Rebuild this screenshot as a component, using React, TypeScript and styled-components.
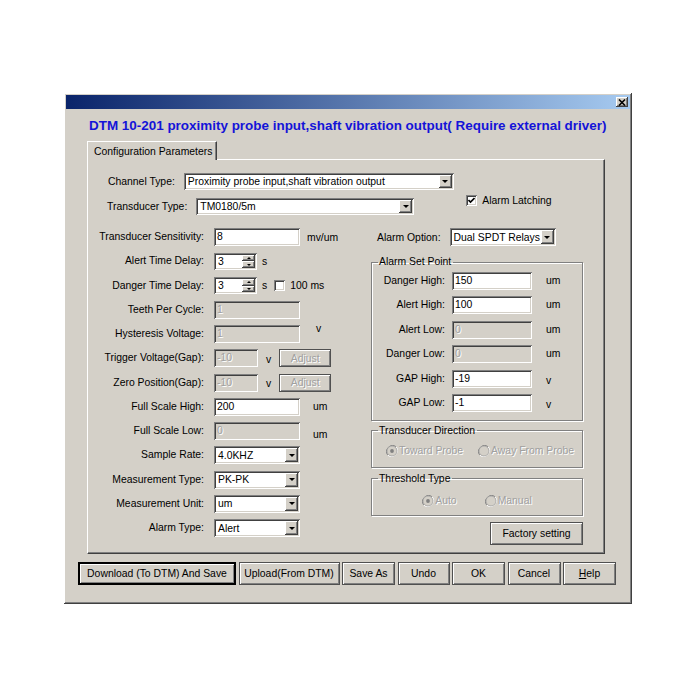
import React from "react";
import styled, { createGlobalStyle, css } from "styled-components";

const GlobalStyle = createGlobalStyle`
    html, body {
        margin: 0;
        padding: 0;
        background: #ffffff;
    }
    body {
        font-family: "Liberation Sans", Arial, sans-serif;
        font-size: 10.4px;
        color: #000;
    }
`;

const face = "#d4d0c8";

const sunken = css`
    box-shadow: inset 1px 1px #808080, inset -1px -1px #ffffff, inset 2px 2px #404040, inset -2px -2px ${face};
`;

const raised = css`
    box-shadow: inset -1px -1px #404040, inset 1px 1px #ffffff, inset -2px -2px #808080, inset 2px 2px ${face};
`;

const Page = styled.div`
    padding: 93px 0 0 64px;
`;

const Window = styled.div`
    width: 568px;
    height: 511px;
    box-sizing: border-box;
    background: ${face};
    padding: 2px;
    ${raised};
    display: flex;
    flex-direction: column;
`;

const TitleBar = styled.div`
    height: 14px;
    background: linear-gradient(to right, #0a246a, #a6caf0);
    display: flex;
    justify-content: flex-end;
    align-items: center;
    padding-right: 2px;
`;

const CloseButton = styled.div`
    width: 12px;
    height: 10px;
    background: ${face};
    ${raised};
    display: flex;
    align-items: center;
    justify-content: center;
`;

const Heading = styled.h1`
    margin: 0;
    padding: 6px 0 0 23px;
    height: 22px;
    font-size: 13.45px;
    font-weight: bold;
    color: #1414d8;
    line-height: 22px;
    white-space: nowrap;
`;

const TabStrip = styled.div`
    margin: 4px 0 0 21px;
    display: flex;
`;

const Tab = styled.div`
    position: relative;
    z-index: 1;
    width: 130px;
    height: 19px;
    box-sizing: border-box;
    padding: 4px 0 0 6px;
    background: ${face};
    border-top: 1px solid #ffffff;
    border-left: 1px solid #ffffff;
    border-right: 1px solid #404040;
    box-shadow: inset -1px 0 #808080;
    margin-bottom: -1px;
`;

const Panel = styled.div`
    margin-left: 21px;
    width: 518px;
    height: 395px;
    box-sizing: border-box;
    border-top: 1px solid #ffffff;
    border-left: 1px solid #ffffff;
    border-right: 1px solid #404040;
    border-bottom: 1px solid #404040;
    box-shadow: inset -1px -1px #808080;
    padding-top: 13px;
    display: flex;
    flex-direction: column;
`;

const TopRow = styled.div<{ $indent: number; $gap: number }>`
    display: flex;
    align-items: flex-start;
    height: 17px;
    padding-left: ${({ $indent }) => $indent}px;
    gap: ${({ $gap }) => $gap}px;
    margin-bottom: 8px;
`;

const TopLabel = styled.span`
    line-height: 17px;
    white-space: nowrap;
`;

const Columns = styled.div`
    display: flex;
    margin-top: 5px;
`;

const LeftGrid = styled.div`
    width: 283px;
    display: grid;
    grid-template-columns: 116px auto;
    grid-auto-rows: 18px;
    column-gap: 10px;
    row-gap: 6.25px;
`;

const Label = styled.span`
    text-align: right;
    line-height: 18px;
    white-space: nowrap;
`;

const Cell = styled.div`
    display: flex;
    align-items: center;
    height: 18px;
`;

const Unit = styled.span<{ $gap: number; $shift?: number }>`
    margin-left: ${({ $gap }) => $gap}px;
    position: relative;
    top: ${({ $shift }) => $shift || 0}px;
    white-space: nowrap;
`;

const TextBox = styled.div<{ $width: number; $disabled?: boolean }>`
    width: ${({ $width }) => $width}px;
    height: 18px;
    box-sizing: border-box;
    padding: 0 3px;
    line-height: 18px;
    white-space: nowrap;
    background: ${({ $disabled }) => ($disabled ? face : "#ffffff")};
    color: ${({ $disabled }) => ($disabled ? "#a0a0a0" : "#000")};
    text-shadow: ${({ $disabled }) => ($disabled ? "1px 1px #ffffff" : "none")};
    ${sunken};
`;

const ComboBox = styled.div<{ $width: number; $height?: number }>`
    width: ${({ $width }) => $width}px;
    height: ${({ $height }) => $height || 18}px;
    box-sizing: border-box;
    padding: 2px;
    background: #ffffff;
    display: flex;
    ${sunken};
`;

const ComboText = styled.span`
    flex: 1;
    padding-left: 2px;
    align-self: center;
    white-space: nowrap;
    overflow: hidden;
`;

const DropButton = styled.div`
    width: 13px;
    background: ${face};
    ${raised};
    display: flex;
    align-items: center;
    justify-content: center;
`;

const Arrow = styled.div<{ $size: number; $up?: boolean }>`
    width: 0;
    height: 0;
    border-left: ${({ $size }) => $size}px solid transparent;
    border-right: ${({ $size }) => $size}px solid transparent;
    ${({ $up, $size }) =>
        $up ? `border-bottom: ${$size}px solid #000;` : `border-top: ${$size}px solid #000;`}
`;

const SpinBox = styled.div`
    width: 43px;
    height: 17px;
    box-sizing: border-box;
    padding: 2px;
    background: #ffffff;
    display: flex;
    ${sunken};
`;

const SpinButtons = styled.div`
    width: 13px;
    display: flex;
    flex-direction: column;
`;

const SpinHalf = styled.div`
    flex: 1;
    background: ${face};
    ${raised};
    display: flex;
    align-items: center;
    justify-content: center;
`;

const CheckBox = styled.div`
    width: 11px;
    height: 11px;
    box-sizing: border-box;
    background: #ffffff;
    ${sunken};
    display: flex;
    align-items: center;
    justify-content: center;
`;

const CheckItem = styled.label<{ $gap: number; $lift?: number }>`
    display: flex;
    align-items: center;
    gap: 5px;
    margin-left: ${({ $gap }) => $gap}px;
    margin-top: ${({ $lift }) => -($lift || 0)}px;
    white-space: nowrap;
`;

const Button = styled.div<{ $width: number; $height?: number; $default?: boolean; $disabled?: boolean }>`
    width: ${({ $width }) => $width}px;
    height: ${({ $height }) => $height || 23}px;
    box-sizing: border-box;
    display: flex;
    align-items: center;
    justify-content: center;
    white-space: nowrap;
    background: ${face};
    color: ${({ $disabled }) => ($disabled ? "#a0a0a0" : "#000")};
    text-shadow: ${({ $disabled }) => ($disabled ? "1px 1px #ffffff" : "none")};
    border: 1px solid ${({ $default }) => ($default ? "#000" : "#505050")};
    box-shadow: ${({ $default }) =>
        $default
            ? "inset 1px 1px #000, inset -1px -1px #000, inset 2px 2px #fff, inset -2px -2px #808080"
            : "inset 1px 1px #fff, inset -1px -1px #808080"};
`;

const AdjustButton = styled(Button)`
    margin-left: 8px;
`;

const RightColumn = styled.div`
    width: 212px;
    display: flex;
    flex-direction: column;
`;

const OptionRow = styled.div`
    display: flex;
    align-items: center;
    padding-left: 6px;
    gap: 9px;
    height: 18px;
    margin-bottom: 10px;
`;

const GroupBox = styled.fieldset<{ $mt?: number; $pb: number }>`
    margin: ${({ $mt }) => $mt || 0}px 0 0 0;
    padding: 4px 0 ${({ $pb }) => $pb}px 0;
    border: 1px solid #808080;
    box-shadow: 1px 1px #ffffff, inset 1px 1px #ffffff;
    min-width: 0;
`;

const Legend = styled.legend`
    margin-left: 6px;
    padding: 0 2px 0 1px;
    line-height: 12px;
`;

const SetPointGrid = styled.div`
    display: grid;
    grid-template-columns: 73px 80px auto;
    grid-auto-rows: 18px;
    column-gap: 7px;
    row-gap: 6.4px;
`;

const SetPointUnit = styled.span<{ $shift?: number }>`
    line-height: 18px;
    padding-left: 7px;
    position: relative;
    top: ${({ $shift }) => $shift || 0}px;
`;

const RadioRow = styled.div<{ $center?: boolean; $gap: number; $mt?: number }>`
    display: flex;
    align-items: center;
    justify-content: ${({ $center }) => ($center ? "center" : "flex-start")};
    padding-left: ${({ $center }) => ($center ? 0 : 14)}px;
    gap: ${({ $gap }) => $gap}px;
    height: 18px;
    margin-top: ${({ $mt }) => $mt || 0}px;
`;

const RadioItem = styled.span`
    display: flex;
    align-items: center;
    gap: 1px;
    color: #a0a0a0;
    text-shadow: 1px 1px #ffffff;
    white-space: nowrap;
`;

const FactoryRow = styled.div`
    display: flex;
    justify-content: flex-end;
    margin-top: 6px;
`;

const ButtonBar = styled.div`
    display: flex;
    gap: 2.5px;
    margin: 8px 0 0 12px;
`;

const Hotkey = styled.span`
    text-decoration: underline;
`;

const Combo: React.FC<{ width: number; height?: number; value: string }> = ({ width, height, value }) => (
    <ComboBox $width={width} $height={height}>
        <ComboText>{value}</ComboText>
        <DropButton>
            <Arrow $size={3} />
        </DropButton>
    </ComboBox>
);

const Spin: React.FC<{ value: string }> = ({ value }) => (
    <SpinBox>
        <ComboText>{value}</ComboText>
        <SpinButtons>
            <SpinHalf>
                <Arrow $size={2} $up />
            </SpinHalf>
            <SpinHalf>
                <Arrow $size={2} />
            </SpinHalf>
        </SpinButtons>
    </SpinBox>
);

const Check: React.FC<{ checked?: boolean }> = ({ checked }) => (
    <CheckBox>
        {checked && (
            <svg width="7" height="7" viewBox="0 0 7 7">
                <path d="M0.5 3 L2.5 5 L6.5 1" stroke="#000" strokeWidth="1.6" fill="none" />
            </svg>
        )}
    </CheckBox>
);

const Radio: React.FC<{ selected?: boolean; label: string }> = ({ selected, label }) => (
    <RadioItem>
        <svg width="12" height="12" viewBox="0 0 12 12">
            <path d="M10.2 1.8 A6 6 0 0 0 1.8 10.2" stroke="#808080" fill="none" />
            <path d="M1.8 10.2 A6 6 0 0 0 10.2 1.8" stroke="#ffffff" fill="none" />
            <circle cx="6" cy="6" r="5" fill={face} stroke="#a0a0a0" strokeWidth="0.8" />
            {selected && <circle cx="6" cy="6" r="1.9" fill="#808080" />}
        </svg>
        {label}
    </RadioItem>
);

const App: React.FC = () => {
    return (
        <Page>
            <GlobalStyle />
            <Window>
                <TitleBar>
                    <CloseButton>
                        <svg width="8" height="7" viewBox="0 0 8 7">
                            <path d="M1 0.5 L7 6.5 M7 0.5 L1 6.5" stroke="#000" strokeWidth="1.6" />
                        </svg>
                    </CloseButton>
                </TitleBar>
                <Heading>DTM 10-201 proximity probe input,shaft vibration output( Require external driver)</Heading>
                <TabStrip>
                    <Tab>Configuration Parameters</Tab>
                </TabStrip>
                <Panel>
                    <TopRow $indent={20} $gap={9}>
                        <TopLabel>Channel Type:</TopLabel>
                        <Combo width={270} height={17} value="Proximity probe input,shaft vibration output" />
                    </TopRow>
                    <TopRow $indent={19} $gap={9}>
                        <TopLabel>Transducer Type:</TopLabel>
                        <Combo width={218} height={17} value="TM0180/5m" />
                        <CheckItem $gap={43} $lift={3}>
                            <Check checked />
                            Alarm Latching
                        </CheckItem>
                    </TopRow>
                    <Columns>
                        <LeftGrid>
                            <Label>Transducer Sensitivity:</Label>
                            <Cell>
                                <TextBox $width={86}>8</TextBox>
                                <Unit $gap={7}>mv/um</Unit>
                            </Cell>
                            <Label>Alert Time Delay:</Label>
                            <Cell>
                                <Spin value="3" />
                                <Unit $gap={5}>s</Unit>
                            </Cell>
                            <Label>Danger Time Delay:</Label>
                            <Cell>
                                <Spin value="3" />
                                <Unit $gap={5}>s</Unit>
                                <CheckItem $gap={7}>
                                    <Check />
                                    100 ms
                                </CheckItem>
                            </Cell>
                            <Label>Teeth Per Cycle:</Label>
                            <Cell>
                                <TextBox $width={86} $disabled>1</TextBox>
                            </Cell>
                            <Label>Hysteresis Voltage:</Label>
                            <Cell>
                                <TextBox $width={86} $disabled>1</TextBox>
                                <Unit $gap={16} $shift={-6}>v</Unit>
                            </Cell>
                            <Label>Trigger Voltage(Gap):</Label>
                            <Cell>
                                <TextBox $width={44} $disabled>-10</TextBox>
                                <Unit $gap={8} $shift={1}>v</Unit>
                                <AdjustButton $width={52} $height={18} $disabled>Adjust</AdjustButton>
                            </Cell>
                            <Label>Zero Position(Gap):</Label>
                            <Cell>
                                <TextBox $width={44} $disabled>-10</TextBox>
                                <Unit $gap={8} $shift={1}>v</Unit>
                                <AdjustButton $width={52} $height={18} $disabled>Adjust</AdjustButton>
                            </Cell>
                            <Label>Full Scale High:</Label>
                            <Cell>
                                <TextBox $width={86}>200</TextBox>
                                <Unit $gap={13}>um</Unit>
                            </Cell>
                            <Label>Full Scale Low:</Label>
                            <Cell>
                                <TextBox $width={86} $disabled>0</TextBox>
                                <Unit $gap={13} $shift={3}>um</Unit>
                            </Cell>
                            <Label>Sample Rate:</Label>
                            <Cell>
                                <Combo width={86} value="4.0KHZ" />
                            </Cell>
                            <Label>Measurement Type:</Label>
                            <Cell>
                                <Combo width={86} value="PK-PK" />
                            </Cell>
                            <Label>Measurement Unit:</Label>
                            <Cell>
                                <Combo width={86} value="um" />
                            </Cell>
                            <Label>Alarm Type:</Label>
                            <Cell>
                                <Combo width={86} value="Alert" />
                            </Cell>
                        </LeftGrid>
                        <RightColumn>
                            <OptionRow>
                                <TopLabel>Alarm Option:</TopLabel>
                                <Combo width={106} value="Dual SPDT Relays" />
                            </OptionRow>
                            <GroupBox $pb={8}>
                                <Legend>Alarm Set Point</Legend>
                                <SetPointGrid>
                                    <Label>Danger High:</Label>
                                    <TextBox $width={80}>150</TextBox>
                                    <SetPointUnit>um</SetPointUnit>
                                    <Label>Alert High:</Label>
                                    <TextBox $width={80}>100</TextBox>
                                    <SetPointUnit>um</SetPointUnit>
                                    <Label>Alert Low:</Label>
                                    <TextBox $width={80} $disabled>0</TextBox>
                                    <SetPointUnit>um</SetPointUnit>
                                    <Label>Danger Low:</Label>
                                    <TextBox $width={80} $disabled>0</TextBox>
                                    <SetPointUnit>um</SetPointUnit>
                                    <Label>GAP High:</Label>
                                    <TextBox $width={80}>-19</TextBox>
                                    <SetPointUnit $shift={2}>v</SetPointUnit>
                                    <Label>GAP Low:</Label>
                                    <TextBox $width={80}>-1</TextBox>
                                    <SetPointUnit $shift={2}>v</SetPointUnit>
                                </SetPointGrid>
                            </GroupBox>
                            <GroupBox $mt={4} $pb={7}>
                                <Legend>Transducer Direction</Legend>
                                <RadioRow $gap={15} $mt={1}>
                                    <Radio selected label="Toward Probe" />
                                    <Radio label="Away From Probe" />
                                </RadioRow>
                            </GroupBox>
                            <GroupBox $mt={5} $pb={5}>
                                <Legend>Threshold Type</Legend>
                                <RadioRow $center $gap={28} $mt={3}>
                                    <Radio selected label="Auto" />
                                    <Radio label="Manual" />
                                </RadioRow>
                            </GroupBox>
                            <FactoryRow>
                                <Button $width={93}>Factory setting</Button>
                            </FactoryRow>
                        </RightColumn>
                    </Columns>
                </Panel>
                <ButtonBar>
                    <Button $width={158} $default>Download (To DTM) And Save</Button>
                    <Button $width={101}>Upload(From DTM)</Button>
                    <Button $width={53}>Save As</Button>
                    <Button $width={52}>Undo</Button>
                    <Button $width={53}>OK</Button>
                    <Button $width={53}>Cancel</Button>
                    <Button $width={53}>
                        <Hotkey>H</Hotkey>elp
                    </Button>
                </ButtonBar>
            </Window>
        </Page>
    );
};

export default App;
